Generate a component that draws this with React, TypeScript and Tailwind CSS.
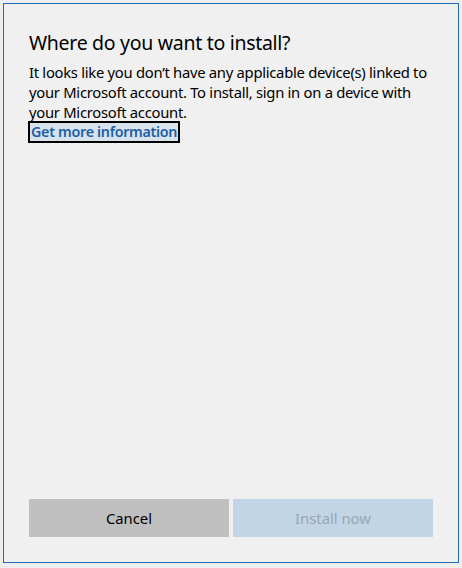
import React from "react";

export default function App() {
  return (
    <div
      className="w-[462px] h-[568px] bg-[#eeeeee] pt-[3px] pl-[3px]"
      style={{ fontFamily: '"Noto Sans", "Open Sans", sans-serif' }}
    >
      <div className="w-[456px] h-[560px] border border-[#1f6bb5] bg-[#f0f0f0] flex flex-col px-[25px] pb-[25px]">
        <h1 className="mt-[26px] text-[19.5px] leading-[26px] text-[#000000] tracking-[-0.3px]">
          Where do you want to install?
        </h1>
        <p className="mt-[6px] text-[14.8px] leading-[20px] text-[#000000] tracking-[-0.28px]">
          It looks like you don’t have any applicable device(s) linked to
          <br />
          your Microsoft account. To install, sign in on a device with
          <br />
          your Microsoft account.
        </p>
        <div className="flex">
          <a className="-ml-[1px] -mt-[1px] border-2 border-black bg-[#d8e2ec] px-[1px] text-[14.3px] leading-[18px] font-semibold text-[#1c5fa6] tracking-[-0.3px]">
            Get more information
          </a>
        </div>
        <div className="flex-1" />
        <div className="flex gap-[4px]">
          <button className="w-[200px] h-[38px] bg-[#bfbfbf] text-[14.8px] text-black">
            Cancel
          </button>
          <button className="w-[200px] h-[38px] bg-[#c1d5e6] text-[14.8px] text-[#97a6b3]">
            Install now
          </button>
        </div>
      </div>
    </div>
  );
}
